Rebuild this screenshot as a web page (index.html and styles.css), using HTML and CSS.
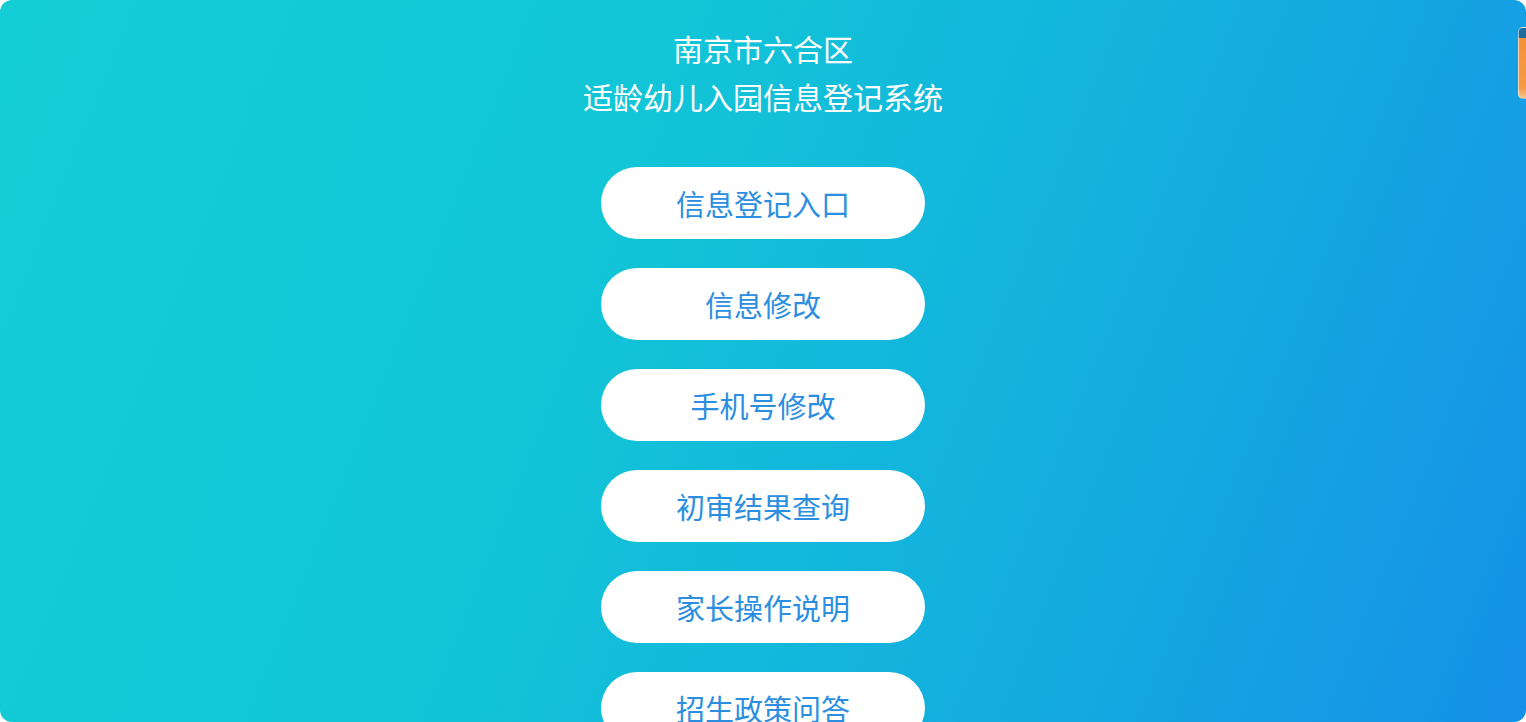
FILE: index.html
```html
<!DOCTYPE html>
<html lang="zh-CN">
<head>
    <meta charset="UTF-8">
    <meta name="viewport" content="width=device-width, initial-scale=1.0">
    <title>适龄幼儿入园信息登记系统</title>
    <link rel="stylesheet" href="styles.css">
</head>
<body>
    <div class="page">
        <div class="title">
            <div>南京市六合区</div>
            <div>适龄幼儿入园信息登记系统</div>
        </div>
        <div class="menu">
            <a class="menu-btn" href="#">信息登记入口</a>
            <a class="menu-btn" href="#">信息修改</a>
            <a class="menu-btn" href="#">手机号修改</a>
            <a class="menu-btn" href="#">初审结果查询</a>
            <a class="menu-btn" href="#">家长操作说明</a>
            <a class="menu-btn" href="#">招生政策问答</a>
        </div>
        <div class="side-tab"></div>
    </div>
</body>
</html>
```

FILE: styles.css
```css
html, body {
    margin: 0;
    padding: 0;
    height: 100%;
    background-color: #fff;
    overflow: hidden;
}

body {
    font-family: "Noto Sans CJK SC", "Noto Sans", sans-serif;
}

.page {
    position: relative;
    height: 722px;
    border-radius: 12px;
    overflow: hidden;
    background: linear-gradient(112deg, #13cdd4 0%, #12c5d7 38%, #14acdf 72%, #1590e8 100%);
    display: flex;
    flex-direction: column;
    align-items: center;
}

.title {
    padding-top: 24px;
    color: #fff;
    font-size: 30px;
    line-height: 48px;
    text-align: center;
}

.menu {
    margin-top: 47px;
    display: flex;
    flex-direction: column;
    gap: 29px;
}

.menu-btn {
    display: flex;
    align-items: center;
    justify-content: center;
    width: 324px;
    height: 72px;
    border-radius: 36px;
    background-color: #fff;
    color: #2b8ee0;
    font-size: 29px;
    text-decoration: none;
}

.side-tab {
    position: absolute;
    top: 27px;
    right: -6px;
    width: 12px;
    height: 70px;
    border-radius: 5px;
    border: 1px solid rgba(255, 255, 255, 0.6);
    background: linear-gradient(to bottom, #1f6a9a 0, #1f6a9a 10px, #f4913a 10px, #f59a45 85%, #f7c58a 100%);
}
```
